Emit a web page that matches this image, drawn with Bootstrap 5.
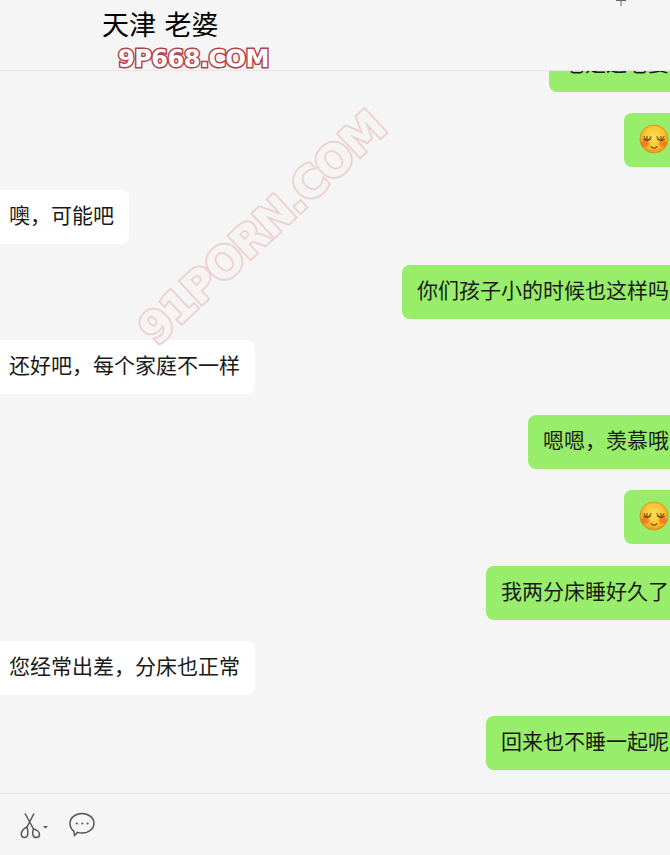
<!DOCTYPE html>
<html lang="zh-CN">
<head>
    <meta charset="UTF-8">
    <meta name="viewport" content="width=device-width, initial-scale=1.0">
    <title>天津 老婆</title>
    <link href="https://cdn.jsdelivr.net/npm/bootstrap@5.3.0/dist/css/bootstrap.min.css" rel="stylesheet">
    <style>
        html, body { height: 100%; }
        body {
            background: #f5f5f5;
            color: #1a1a1a;
            font-family: "Liberation Sans", "Noto Sans CJK SC", sans-serif;
            overflow: hidden;
        }
        .chat-shell { height: 855px; }
        .chat-head {
            height: 71px;
            flex: none;
            padding: 6px 0 0 102px;
            border-bottom: 1px solid #e7e7e7;
            font-size: 27px;
            line-height: 40px;
            word-spacing: 1px;
            color: #000;
        }
        .head-plus { position: absolute; left: 616px; top: 0; }
        .site-mark {
            position: absolute;
            left: 118px;
            top: 44px;
            font: bold 24px/30px "DejaVu Sans", sans-serif;
            letter-spacing: -0.5px;
            color: #fff;
            -webkit-text-stroke: 3px #b5404c;
            paint-order: stroke fill;
        }
        .msg-list {
            height: 722px;
            flex: none;
            padding-bottom: 23px;
            gap: 21px;
            overflow: hidden;
        }
        .bubble {
            flex: none;
            height: 54px;
            padding: 0 15px;
            border-radius: 8px;
            font-size: 21px;
            line-height: 52px;
            white-space: nowrap;
        }
        .bubble-in { align-self: flex-start; margin-left: -6px; background: #fff; }
        .bubble-out { align-self: flex-end; margin-right: -14px; background: #98ee6a; }
        .bubble-emoji svg { display: block; margin-top: 11px; }
        .gap-plus-1 { margin-top: 1px; }
        .gap-plus-2 { margin-top: 2px; }
        .wide-mark {
            position: absolute;
            left: 262px;
            top: 228px;
            transform: translate(-50%, -50%) rotate(-43deg);
            font: bold 44px/50px "DejaVu Sans", sans-serif;
            letter-spacing: -1.5px;
            white-space: nowrap;
            color: #f6f3f3;
            -webkit-text-stroke: 3.5px #eccfcf;
            paint-order: stroke fill;
        }
        .chat-tools {
            height: 62px;
            flex: none;
            padding: 18px 0 0 20px;
            gap: 21px;
            border-top: 1px solid #e7e7e7;
        }
        .chat-tools svg { display: block; }
    </style>
</head>
<body>
    <svg width="0" height="0" class="position-absolute">
        <defs>
            <radialGradient id="faceFill" cx="50%" cy="42%" r="58%">
                <stop offset="0" stop-color="#ffe05a"/>
                <stop offset="0.65" stop-color="#fdc22e"/>
                <stop offset="1" stop-color="#ea961a"/>
            </radialGradient>
            <symbol id="shyFace" viewBox="0 0 30 30">
                <circle cx="15" cy="15" r="14" fill="url(#faceFill)" stroke="#d08c1c" stroke-width="0.8"/>
                <ellipse cx="6" cy="19.500" rx="4" ry="3.200" fill="#f2661f" opacity="0.7"/>
                <ellipse cx="24" cy="19.500" rx="4" ry="3.200" fill="#f2661f" opacity="0.7"/>
                <path d="M4 15c2.500 1.800 5.500 1.800 8 0M5 12.500l2 3.500M8 12.500v4M12 12.500l-2.500 3.500M18 15c2.500 1.800 5.500 1.800 8 0M18 12.500l2.500 3.500M22 12.500v4M25 12.500l-2 3.500" fill="none" stroke="#5c3210" stroke-width="1" stroke-linecap="round"/>
                <path d="M12 22.500c1.500 2.200 4.500 2.200 6 0" fill="none" stroke="#7a4312" stroke-width="1.100" stroke-linecap="round"/>
            </symbol>
        </defs>
    </svg>

    <div class="chat-shell d-flex flex-column position-relative">
        <div class="chat-head">天津 老婆</div>

        <div class="msg-list d-flex flex-column justify-content-end">
            <div class="bubble bubble-out">老是这老婆</div>
            <div class="bubble bubble-out bubble-emoji"><svg width="30" height="30"><use href="#shyFace"/></svg></div>
            <div class="bubble bubble-in gap-plus-2">噢，可能吧</div>
            <div class="bubble bubble-out">你们孩子小的时候也这样吗</div>
            <div class="bubble bubble-in">还好吧，每个家庭不一样</div>
            <div class="bubble bubble-out">嗯嗯，羡慕哦</div>
            <div class="bubble bubble-out bubble-emoji"><svg width="30" height="30"><use href="#shyFace"/></svg></div>
            <div class="bubble bubble-out gap-plus-1">我两分床睡好久了</div>
            <div class="bubble bubble-in">您经常出差，分床也正常</div>
            <div class="bubble bubble-out">回来也不睡一起呢</div>
        </div>

        <div class="chat-tools d-flex align-items-start">
            <svg width="28" height="28" viewBox="0 0 28 28" fill="none" stroke="#555" stroke-width="1.500">
                <path d="M5 1.500l8.500 15.500M14 1.500L7 15"/>
                <path d="M7 15c-2.800 1-5.700 4-5.700 7 0 2.300 1.600 3.500 3.400 3.500 3 0 4.300-4 2.300-10.500z"/>
                <path d="M13.500 17c2.500.5 6 2.500 6 5.500 0 2-1.500 3-3.200 3-3 0-5-3.500-2.800-8.500z"/>
                <path d="M23 14h5l-2.500 2.500z" fill="#555" stroke="none"/>
            </svg>
            <svg width="26" height="26" viewBox="0 0 26 26" fill="none" stroke="#555" stroke-width="1.500">
                <path d="M13 1.500c6.700 0 12 4.300 12 9.800s-5.300 9.800-12 9.800c-1.600 0-3.100-.2-4.500-.7L5.500 23.500l-.6-4.200C2.500 17.500 1 14.600 1 11.300 1 5.800 6.300 1.500 13 1.500z"/>
                <circle cx="7.800" cy="11.500" r="1.100" fill="#555" stroke="none"/>
                <circle cx="13.300" cy="11.500" r="1.100" fill="#555" stroke="none"/>
                <circle cx="18.600" cy="11.500" r="1.100" fill="#555" stroke="none"/>
            </svg>
        </div>

        <svg class="head-plus" width="10" height="6" viewBox="0 0 10 6"><path d="M0 .5h10M5 0v6" stroke="#666" fill="none"/></svg>
        <div class="site-mark">9P668.COM</div>
        <div class="wide-mark">91PORN.COM</div>
    </div>

    <script src="https://cdn.jsdelivr.net/npm/bootstrap@5.3.0/dist/js/bootstrap.bundle.min.js"></script>
</body>
</html>
